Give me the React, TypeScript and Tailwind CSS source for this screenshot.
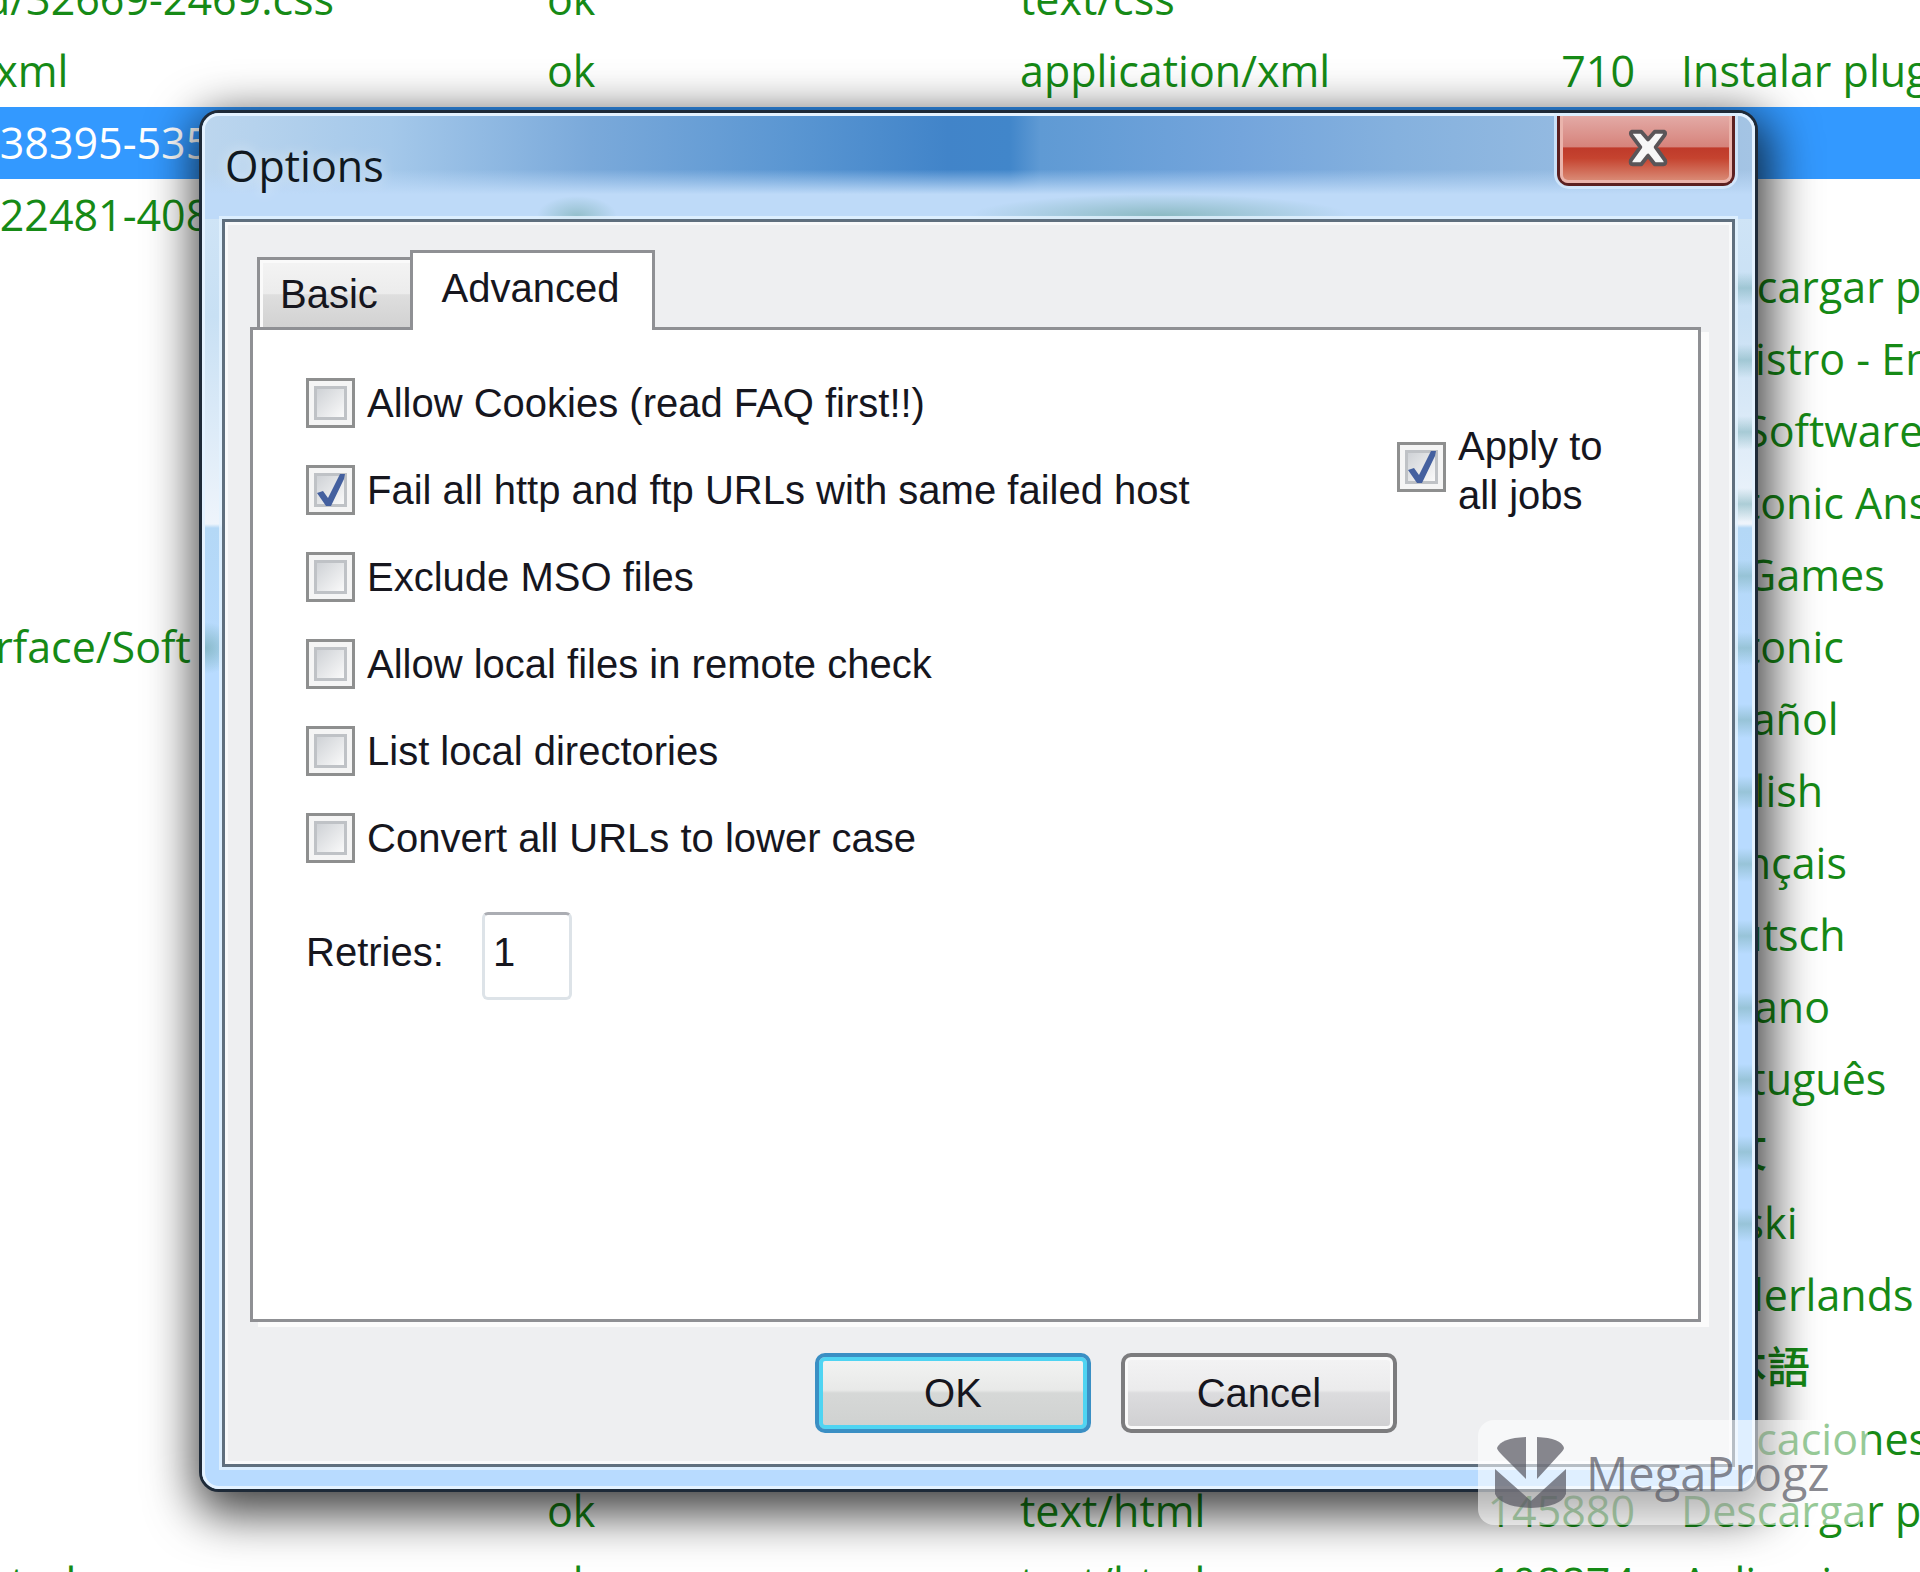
import { useState } from 'react'

type LinkRow = {
  url?: string
  status?: string
  type?: string
  size?: string
  title?: string
  selected?: boolean
}

const rows: LinkRow[] = [
  { url: 'd/32669-2469.css', status: 'ok', type: 'text/css' },
  { url: '.xml', status: 'ok', type: 'application/xml', size: '710', title: 'Instalar plugins' },
  { url: '/38395-535', selected: true },
  { url: '/22481-408' },
  { title: 'Descargar programas' },
  { title: 'Registro - Entrar' },
  { title: 'PC Software' },
  { title: 'Softonic Answers' },
  { title: 'PC Games' },
  { url: '\u00a0rface/Soft', title: 'Softonic' },
  { title: 'Español' },
  { title: 'English' },
  { title: 'Français' },
  { title: 'Deutsch' },
  { title: 'Italiano' },
  { title: 'Português' },
  { title: '中文' },
  { title: 'Polski' },
  { title: 'Nederlands' },
  { title: '日本語' },
  { title: 'Aplicaciones web' },
  { status: 'ok', type: 'text/html', size: '145880', title: 'Descargar programas' },
  { url: 'html', status: 'ok', type: 'text/html', size: '108874', title: 'Aplicaciones web' },
]

const options = [
  { id: 'cookies', label: 'Allow Cookies (read FAQ first!!)', on: false },
  { id: 'fail-host', label: 'Fail all http and ftp URLs with same failed host', on: true },
  { id: 'mso', label: 'Exclude MSO files', on: false },
  { id: 'local', label: 'Allow local files in remote check', on: false },
  { id: 'dirs', label: 'List local directories', on: false },
  { id: 'lower', label: 'Convert all URLs to lower case', on: false },
]

function LinkTable() {
  return (
    <table className="-mt-[37px] w-full table-fixed border-collapse whitespace-nowrap text-[43px] leading-[72px] font-medium text-[#168a16]">
      <colgroup>
        <col className="w-[547px]" />
        <col className="w-[473px]" />
        <col className="w-[400px]" />
        <col className="w-[215px]" />
        <col />
      </colgroup>
      <tbody>
        {rows.map((row, i) => (
          <tr key={i} className={row.selected ? 'h-[72px] bg-[#3399ff] text-white' : 'h-[72px]'}>
            <td className="p-0">
              <div className="-ml-4">{row.url}</div>
            </td>
            <td className="p-0">{row.status}</td>
            <td className="p-0">{row.type}</td>
            <td className="p-0 text-right">{row.size}</td>
            <td className="overflow-hidden p-0 pl-[46px]">{row.title}</td>
          </tr>
        ))}
      </tbody>
    </table>
  )
}

function CheckBox({ id, on }: { id: string; on: boolean }) {
  const [checked, setChecked] = useState(on)

  return (
    <span className="relative h-[50px] w-[49px] shrink-0">
      <input
        id={id}
        type="checkbox"
        checked={checked}
        onChange={(e) => setChecked(e.target.checked)}
        className="block h-full w-full appearance-none border-[3px] border-[#8e8f8f] bg-[#f5f5f5] p-[5px] before:block before:h-full before:w-full before:border-[3px] before:border-[#bfc2c6] before:bg-linear-to-br before:from-[#cfd2d6] before:to-[#fafafa] before:content-['']"
      />
      {checked && (
        <svg viewBox="0 0 49 50" className="pointer-events-none absolute inset-0 h-full w-full">
          <path d="M11 28 L17 26 L22 33 L34 9 L39 9 L38 14 L25 41 L20 41 Z" fill="#44609f" />
        </svg>
      )}
    </span>
  )
}

function CloseButton() {
  return (
    <button
      type="button"
      aria-label="Close"
      className="flex h-[70px] w-[178px] items-center justify-center rounded-b-xl border-[3px] border-t-0 border-[#5c2020] bg-[#d88078] p-0 shadow-[0_0_0_3px_rgba(220,238,255,0.75)]"
    >
      <span className="flex h-full w-full items-center justify-center rounded-b-lg border-[3px] border-t-0 border-[#eab4ac] bg-[linear-gradient(#e3aaa6_0%,#d6837b_48%,#bf3a2a_50%,#c5432f_66%,#d98974_100%)] pl-1">
        <svg width="42" height="40" viewBox="0 0 44 40">
          <path
            d="M5 3 H15 L22 11 L29 3 H39 Q41 4 39 7 L30 19 L40 33 Q41 37 38 37 H29 L22 28 L15 37 H6 Q3 37 4 33 L14 19 L5 7 Q3 4 5 3 Z"
            fill="#f7f7f7"
            stroke="#5a5558"
            strokeWidth="4"
            strokeLinejoin="round"
          />
        </svg>
      </span>
    </button>
  )
}

function AdvancedPanel() {
  return (
    <div className="flex h-[995px] items-start justify-between border-[3px] border-[#8f9094] bg-white pt-12 pr-[60px] pl-[53px] shadow-[8px_5px_0_#fbfbfb]">
      <div className="flex flex-col">
        <div className="flex flex-col gap-[37px]">
          {options.map((o) => (
            <div key={o.id} className="flex h-[50px] items-center gap-3">
              <CheckBox id={o.id} on={o.on} />
              <label htmlFor={o.id} className="whitespace-nowrap">
                {o.label}
              </label>
            </div>
          ))}
        </div>
        <div className="mt-[49px] flex items-center">
          <label htmlFor="retries" className="w-[176px] pb-2">
            Retries:
          </label>
          <input
            id="retries"
            type="text"
            defaultValue="1"
            className="h-[88px] w-[90px] rounded-md border-[3px] border-[#dde3e8] border-t-[#abadb3] bg-white px-2 pb-2"
          />
        </div>
      </div>

      <div className="mt-9 flex items-center gap-3">
        <CheckBox id="all-jobs" on />
        <label htmlFor="all-jobs" className="w-[180px] pt-2 leading-[49px]">
          Apply to all jobs
        </label>
      </div>
    </div>
  )
}

function OptionsDialog() {
  return (
    <div
      role="dialog"
      aria-label="Options"
      className="absolute top-[110px] right-[162px] left-[199px] rounded-[20px] border-[3px] border-[#1e2a38] bg-[#b8dbff] shadow-[4px_14px_48px_8px_rgba(0,0,0,0.75)]"
    >
      <div className="rounded-[17px] border-[3px] border-[#e4f2ff] bg-[radial-gradient(30px_26px_at_0_532px,rgba(120,175,185,0.75),transparent),linear-gradient(90deg,transparent_50%,rgba(0,0,0,0)_50%),linear-gradient(#cfe4f6_0,#cfe4f6_100px,#c8e0f4_200px,#eef4fb_408px,#b4d8f6_412px,#b8dbff_560px,#b8dbff_100%)]">
        <div className="rounded-[14px] bg-[repeating-linear-gradient(transparent_0,transparent_20px,rgba(130,180,190,0.6)_36px,transparent_54px,transparent_72px)] bg-[size:20px_1010px] bg-[position:right_136px] bg-no-repeat px-[17px] pb-[19px]">
          <div className="-mx-[17px] flex h-[103px] items-start justify-between rounded-t-[14px] bg-[radial-gradient(40px_20px_at_372px_100px,rgba(130,180,185,0.7),transparent),radial-gradient(190px_22px_at_955px_100px,rgba(130,180,185,0.85),transparent),linear-gradient(rgba(190,218,248,0)_52%,rgba(190,218,248,1)_76%),linear-gradient(90deg,#bcd6ee_0%,#a4c8ea_12%,#7aa9da_25%,#5a96d2_38%,#4184c9_48%,#4186ca_52%,#5f9ad4_54%,#74a5dc_67%,#85b1de_77%,#a4c4e4_100%)] pr-[17px] pl-5">
            <h1 className="pt-[14px] text-[43px] leading-[72px] text-[#101820] [text-shadow:0_0_14px_rgba(255,255,255,0.7)]">
              Options
            </h1>
            <CloseButton />
          </div>

          <div className="border-[3px] border-[#5f6f7e] bg-[#eeeff1] pr-[31px] pb-[31px] pl-[25px] font-['Liberation_Sans',Arial,sans-serif] text-[40px] leading-[50px] text-[#16161e] shadow-[0_0_0_3px_rgba(228,242,255,0.8),inset_0_0_0_3px_#f8f9fa]">
            <div role="tablist" className="flex items-end pt-7 pl-[7px]">
              <button
                type="button"
                role="tab"
                aria-selected="false"
                className="h-[70px] w-[153px] border-[3px] border-r-0 border-b-0 border-[#8f9094] bg-[linear-gradient(#f4f4f4_0%,#ececec_50%,#dedede_52%,#d2d2d2_100%)] pl-5 text-left shadow-[inset_3px_3px_0_#fafafa]"
              >
                Basic
              </button>
              <button
                type="button"
                role="tab"
                aria-selected="true"
                className="relative z-10 -mb-[3px] h-[80px] w-[245px] border-[3px] border-b-0 border-[#8f9094] bg-white pr-1 pb-2"
              >
                Advanced
              </button>
            </div>

            <AdvancedPanel />

            <div className="mt-[31px] flex justify-end gap-[30px] pr-[304px]">
              <button
                type="button"
                className="h-20 w-[276px] rounded-[10px] border-[4px] border-[#3a8fc4] bg-[linear-gradient(#f3f4f3_0%,#e8e9e8_46%,#d6d8d7_50%,#cfd1d0_100%)] shadow-[inset_0_0_0_4px_#4fd4f2]"
              >
                OK
              </button>
              <button
                type="button"
                className="h-20 w-[276px] rounded-[10px] border-[4px] border-[#7c7c7e] bg-[linear-gradient(#f3f3f4_0%,#ebebec_46%,#dcdcde_50%,#cfcfd1_100%)] shadow-[inset_0_0_0_3px_#fafafa]"
              >
                Cancel
              </button>
            </div>
          </div>
        </div>
      </div>
    </div>
  )
}

function Watermark() {
  return (
    <div className="absolute top-[1420px] right-[52px] flex h-[105px] w-[390px] items-center gap-5 rounded-[16px] bg-white/55 pl-[17px] text-[#55555f]/70">
      <svg width="71" height="71" viewBox="0 0 71 71" fill="currentColor">
        <path d="M31 0 V42 L8 19 Q2 13 2 11 Q6 1 31 0 Z" />
        <path d="M42 0 V42 L63 19 Q69 13 69 11 Q66 1 42 0 Z" />
        <path d="M0 32 L36 64 L71 32 V57 Q66 70 36 71 Q6 70 0 57 Z" />
      </svg>
      <span className="text-[47px] leading-[50px]">MegaProgz</span>
    </div>
  )
}

export default function App() {
  return (
    <main className="relative h-screen w-full overflow-hidden bg-white font-['Open_Sans','Noto_Sans_CJK_SC',sans-serif]">
      <LinkTable />
      <OptionsDialog />
      <Watermark />
    </main>
  )
}
